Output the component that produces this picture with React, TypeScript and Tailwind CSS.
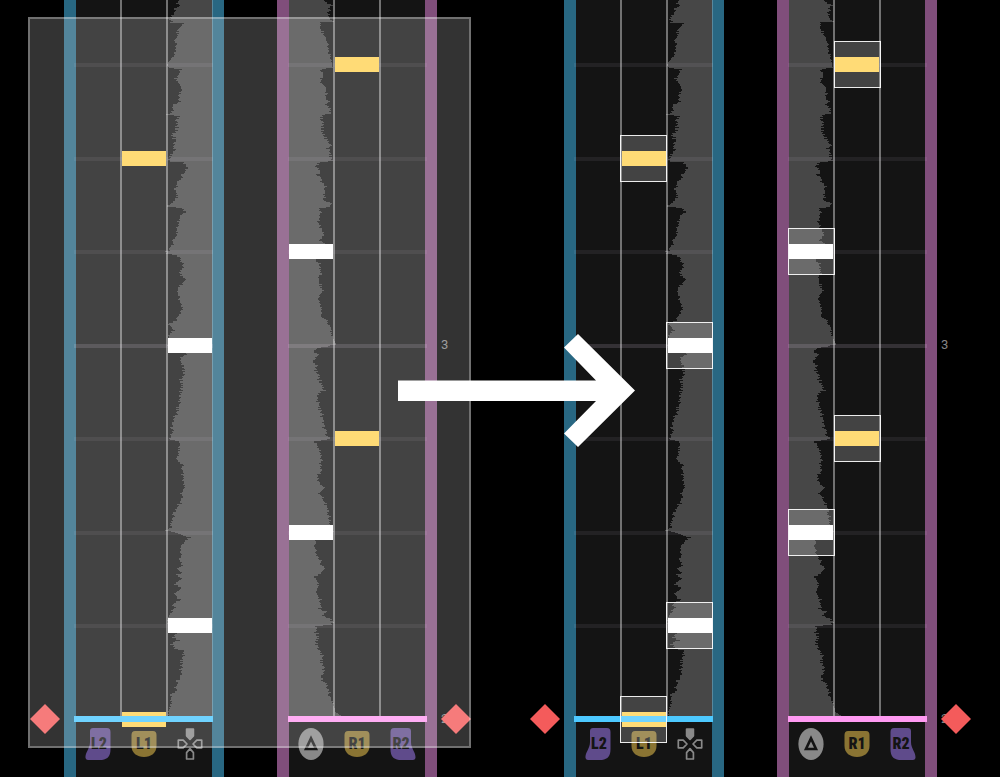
import React from "react";

type Side = "left" | "right";
type Kind = "tap" | "shoulder";
interface Note {
  beat: number;
  lane: number;
  kind: Kind;
}

const LANE = 46;
const BEAT_COUNT = 8;
const beatY = (beat: number) => Math.round(64 + beat * 93.5);

const NOTES: Record<Side, Note[]> = {
  left: [
    { beat: 1, lane: 1, kind: "shoulder" },
    { beat: 3, lane: 2, kind: "tap" },
    { beat: 6, lane: 2, kind: "tap" },
    { beat: 7, lane: 1, kind: "shoulder" },
  ],
  right: [
    { beat: 0, lane: 1, kind: "shoulder" },
    { beat: 2, lane: 0, kind: "tap" },
    { beat: 4, lane: 1, kind: "shoulder" },
    { beat: 5, lane: 0, kind: "tap" },
  ],
};

// Envelope key points: time in pixels, then the wave's edge inside the track.
const WAVE: Record<Side, number[][]> = {
  left: [
    [0, 103], [3, 101], [6, 104], [9, 98], [12, 99], [15, 96], [19, 94], [22, 95], [23, 108], [26, 105], [30, 101], [35, 102], [40, 98], [43, 100],
    [50, 100], [55, 98], [60, 94], [64, 92], [67, 92], [69, 106], [72, 104], [78, 100], [84, 104], [90, 106], [93, 103], [98, 105], [103, 101],
    [105, 97], [110, 99], [114, 92], [116, 103], [120, 99], [125, 101], [130, 100], [134, 95], [140, 100], [145, 97], [150, 98], [155, 95],
    [161, 92], [162, 108], [168, 111], [172, 108], [178, 104], [183, 100], [190, 100], [195, 101], [200, 98], [203, 95], [206, 91], [208, 106],
    [212, 108], [216, 104], [225, 102], [235, 100], [240, 98], [247, 94], [253, 90], [255, 101], [260, 106], [268, 107], [273, 103], [279, 110],
    [285, 104], [290, 101], [298, 103], [305, 106], [313, 105], [320, 100], [324, 93], [330, 98], [335, 93], [345, 92], [351, 96], [353, 110],
    [358, 105], [366, 108], [372, 107], [380, 105], [390, 105], [400, 103], [410, 102], [415, 99], [420, 97], [425, 96], [435, 95], [439, 92],
    [441, 105], [450, 102], [460, 101], [465, 106], [475, 107], [485, 108], [495, 106], [505, 103], [510, 99], [520, 96], [528, 94], [530, 90],
    [532, 99], [537, 113], [541, 109], [545, 105], [550, 104], [555, 106], [560, 103], [565, 107], [568, 102], [572, 106], [574, 101],
    [578, 106], [583, 99], [588, 106], [593, 98], [600, 104], [603, 99], [610, 97], [616, 94], [624, 92], [626, 106], [631, 98], [634, 100],
    [637, 96], [640, 102], [643, 95], [648, 99], [650, 107], [660, 106], [668, 105], [675, 105], [680, 102], [685, 99], [690, 100], [693, 96],
    [700, 95], [708, 93], [716, 92],
  ],
  right: [
    [0, 35], [3, 39], [5, 43], [8, 41], [12, 39], [18, 41], [21, 43], [22, 32], [28, 31], [32, 33], [36, 36], [45, 39], [50, 40], [57, 41],
    [63, 44], [67, 43], [69, 33], [75, 34], [82, 32], [87, 37], [92, 37], [100, 39], [105, 38], [108, 43], [113, 42], [115, 33], [119, 31],
    [125, 34], [132, 32], [138, 37], [145, 42], [148, 38], [152, 41], [160, 43], [162, 31], [166, 26], [170, 31], [175, 29], [182, 33],
    [188, 37], [195, 35], [200, 34], [203, 43], [206, 41], [208, 30], [215, 31], [223, 29], [228, 33], [234, 34], [240, 32], [245, 37],
    [252, 43], [255, 30], [260, 28], [265, 31], [272, 32], [276, 30], [283, 30], [290, 34], [297, 29], [305, 32], [316, 33], [320, 38],
    [328, 42], [338, 44], [344, 47], [347, 32], [350, 26], [355, 29], [361, 25], [365, 29], [370, 26], [378, 30], [385, 32], [390, 35],
    [393, 29], [400, 28], [405, 30], [415, 33], [425, 35], [435, 37], [438, 41], [441, 27], [450, 30], [460, 33], [463, 30], [470, 33],
    [476, 28], [485, 32], [487, 35], [493, 31], [500, 34], [505, 38], [515, 40], [525, 41], [531, 45], [533, 30], [541, 27], [545, 25],
    [555, 28], [560, 32], [563, 31], [568, 37], [574, 30], [577, 26], [585, 30], [592, 27], [600, 31], [605, 34], [608, 29], [611, 38],
    [615, 35], [619, 43], [622, 44], [624, 41], [626, 26], [635, 28], [642, 27], [650, 30], [655, 33], [662, 33], [670, 35], [677, 32],
    [685, 37], [695, 41], [705, 44], [712, 47], [716, 52],
  ],
};

function wavePath(side: Side) {
  const points = WAVE[side];
  const base = side === "left" ? 137 : 0;
  let d = `M${base} 0`;
  let k = 0;
  for (let y = 0; y < 716; y++) {
    while (k < points.length - 2 && points[k + 1][0] <= y) k++;
    const [y0, x0] = points[k];
    const [y1, x1] = points[k + 1];
    const jitter = [0, 1, 0, -1, 0, 2, -1, 0, 1, -2, 0][(y * 7 + ((y * y * 3) % 23)) % 11];
    const x = Math.round(x0 + ((x1 - x0) * (y - y0)) / (y1 - y0)) + jitter;
    d += `H${x}V${y + 1}`;
  }
  return `${d}H${base}Z`;
}

const WAVE_PATHS: Record<Side, string> = { left: wavePath("left"), right: wavePath("right") };

function ButtonText({ x, label }: { x: number; label: string }) {
  return (
    <text
      x={x}
      y="21"
      textAnchor="middle"
      className="fill-[#141414] font-['Roboto_Condensed','Roboto',sans-serif] text-[16px] font-black"
    >
      {label}
    </text>
  );
}

function Trigger({ label, mirrored }: { label: string; mirrored?: boolean }) {
  return (
    <svg width="26" height="32" viewBox="0 0 26 32" aria-label={label}>
      <path
        fill="#5f4b8b"
        d={
          mirrored
            ? "M4 0H18Q21 0 21 3V14C21 21 26 24 25.5 30Q25 32 23 32H9C3 31 .5 28 .5 21V4Q.5 0 4 0Z"
            : "M22 0H8Q5 0 5 3V14C5 21 0 24 .5 30Q1 32 3 32H17C23 31 25.5 28 25.5 21V4Q25.5 0 22 0Z"
        }
      />
      <ButtonText x={mirrored ? 11 : 14} label={label} />
    </svg>
  );
}

function Bumper({ label }: { label: string }) {
  return (
    <svg width="26" height="32" viewBox="0 0 26 32" aria-label={label}>
      <path fill="#8a7433" d="M4 3H22Q25.5 3 25.5 7V18C25.5 25 20 29 13 29S.5 25 .5 18V7Q.5 3 4 3Z" />
      <ButtonText x={13} label={label} />
    </svg>
  );
}

function DPad() {
  return (
    <svg width="26" height="32" viewBox="0 0 26 32" fill="none" stroke="#898989" strokeWidth="1.7" strokeLinejoin="round" aria-label="Directional pad">
      <path fill="#898989" d="M9.6 1H16.4V7.8L13 11.4L9.6 7.8Z" />
      <path d="M1.3 12.2H6.2L10 16L6.2 19.8H1.3Z" />
      <path d="M24.7 12.2H19.8L16 16L19.8 19.8H24.7Z" />
      <path d="M9.6 31V24.6L13 20.6L16.4 24.6V31Z" />
    </svg>
  );
}

function TriangleButton() {
  return (
    <svg width="26" height="32" viewBox="0 0 26 32" aria-label="Triangle">
      <ellipse cx="13" cy="16" rx="12.6" ry="16" fill="#898989" />
      <path d="M13 10.4L18 21H8Z" fill="none" stroke="#141414" strokeWidth="2.6" />
    </svg>
  );
}

function Diamond() {
  return (
    <svg width="30" height="30" viewBox="0 0 30 30" aria-hidden="true">
      <path d="M15 0L30 15L15 30L0 15Z" fill="#f45b5b" />
    </svg>
  );
}

function Track({ side, boxed }: { side: Side; boxed: boolean }) {
  const isLeft = side === "left";
  const boxInset = isLeft ? 2 : 1;
  return (
    <section
      className={`relative flex min-h-screen flex-col border-x-12 bg-[#141414] ${isLeft ? "border-[#286782]" : "border-[#804e7b]"}`}
    >
      <div className="relative grid h-[716px] grid-cols-[46px_46px_1fr]">
        <svg
          className="absolute top-0 left-0"
          width="137"
          height="716"
          viewBox="0 0 137 716"
          shapeRendering="crispEdges"
          overflow="visible"
          aria-hidden="true"
        >
          <path d={WAVE_PATHS[side]} fill="#fff" fillOpacity=".22" />
        </svg>
        <div className="border-r-2 border-white/40" />
        <div className="border-r-2 border-white/40" />
        <div />
        {Array.from({ length: BEAT_COUNT - 1 }, (_, beat) => (
          <div
            key={beat}
            className={`absolute h-1 ${isLeft ? "-right-px -left-0.5" : "-right-0.5 -left-px"} ${beat === 3 ? "bg-[#e8d8f0]/15" : "bg-[#f0e0f8]/7"}`}
            style={{ top: beatY(beat) - 1 }}
          />
        ))}
      </div>
      {NOTES[side].map((note) => (
        <div
          key={note.beat}
          className={`absolute h-[15px] w-11 ${note.kind === "tap" ? "bg-white" : "bg-[#ffd254]"}`}
          style={{ top: beatY(note.beat) - 7, left: note.lane * LANE }}
        />
      ))}
      <div className={`relative h-1.5 ${isLeft ? "-mr-px -ml-0.5 bg-[#4dc9ff]" : "-mr-0.5 -ml-px bg-[#ff9af2]"}`} />
      <div className="grid grid-cols-[46px_46px_46px] justify-center justify-items-center pt-1.5">
        {isLeft ? (
          <>
            <Trigger label="L2" />
            <Bumper label="L1" />
            <DPad />
          </>
        ) : (
          <>
            <TriangleButton />
            <Bumper label="R1" />
            <Trigger label="R2" mirrored />
          </>
        )}
      </div>
      {boxed &&
        NOTES[side].map((note) => (
          <div
            key={note.beat}
            className="absolute size-[47px] border border-white/90 bg-white/20"
            style={{ top: beatY(note.beat) - 23, left: note.lane * LANE - boxInset }}
          />
        ))}
    </section>
  );
}

function Chart({ selecting }: { selecting: boolean }) {
  return (
    <div className="relative grid grid-cols-[64fr_160px_53fr_160px_63fr]">
      <div className="flex justify-end pt-[704px] pr-1">
        <Diamond />
      </div>
      <Track side="left" boxed={!selecting} />
      <div />
      <Track side="right" boxed={!selecting} />
      <div className="relative pt-[337px] pl-1 text-[13px] leading-4 text-[#858585] antialiased">
        <div>3</div>
        <div className="absolute top-[711px]">2</div>
        <div className="absolute top-[704px]">
          <Diamond />
        </div>
      </div>
      {selecting && (
        <div className="absolute top-[17px] right-[29px] left-7 h-[731px] border-2 border-white/30 bg-white/20" />
      )}
    </div>
  );
}

export default function App() {
  return (
    <main className="relative grid min-h-screen grid-cols-2 overflow-hidden bg-black font-['Roboto',sans-serif]">
      <Chart selecting />
      <Chart selecting={false} />
      <svg
        className="absolute top-[334px] left-[398px]"
        width="237"
        height="113"
        viewBox="0 0 237 113"
        aria-label="Becomes"
      >
        <path fill="#fff" d="M0 46.5H198L166 13.5L180 0L237 56.5L180 113L166 99.5L198 67H0Z" />
      </svg>
    </main>
  );
}
